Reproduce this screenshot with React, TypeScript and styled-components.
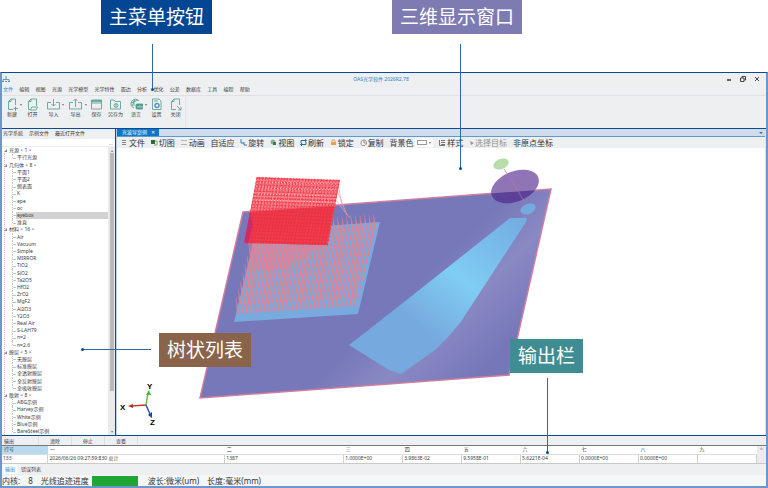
import React from "react";
import styled, { createGlobalStyle, css } from "styled-components";

const navy = "#0a4a94";
const frame = "#6c97cd";
const panel = "#eeeff0";
const teal = "#4b9c8d";

const GlobalStyle = createGlobalStyle`
  * { box-sizing: border-box; }
  body {
    margin: 0;
    background: #fff;
    color: #3c3c3c;
    font-family: "Noto Sans", "Noto Sans CJK SC", sans-serif;
    font-size: 5px;
    line-height: 7px;
  }
  button, input, select {
    margin: 0; padding: 0; border: 0; background: none;
    font: inherit; color: inherit; line-height: inherit;
  }
  ul { margin: 0; padding: 0; list-style: none; }
`;

const Page = styled.main`
  position: relative;
  display: flex;
  flex-direction: column;
  min-height: 100vh;
  padding-top: 72px;
`;

const AppWindow = styled.section`
  flex: 1;
  display: flex;
  flex-direction: column;
  border: solid ${frame};
  border-width: 0 2px 2px;
  border-top: 1px solid ${navy};
  background: ${panel};
`;

const TitleBar = styled.header`
  display: grid;
  grid-template-columns: 1fr auto 1fr;
  align-items: center;
  height: 12px;
  padding: 0 6px 0 0;
`;

const AppTitle = styled.h1`
  margin: 0;
  font-size: 5px;
  font-weight: 400;
  color: #2a86c4;
`;

const WindowButtons = styled.div`
  display: flex;
  justify-content: flex-end;
  gap: 8px;
  button { display: flex; }
`;

const MenuBar = styled.nav`
  display: flex;
  justify-content: space-between;
  width: 248px;
  padding: 1px 0 2px 1px;
  a { color: #3c3c3c; text-decoration: none; white-space: nowrap; }
  a[aria-current] { color: #2394dc; }
`;

const Ribbon = styled.div`
  display: flex;
  height: 33px;
  border-top: 1px solid #e0e1e5;
`;

const RibbonGroup = styled.div`
  display: grid;
  grid-template-columns: 20px 21px 21px 23px 19px 19px 22px 19px 19px;
  padding: 2px 0 6px;
  border-right: 1px solid #e3e4e8;
`;

const RibbonButton = styled.button`
  position: relative;
  display: flex;
  flex-direction: column;
  align-items: center;
  white-space: nowrap;
`;

const Caret = styled.i`
  position: absolute;
  top: 6px;
  right: 0;
  border: solid transparent;
  border-width: 2px 1px 0;
  border-top-color: #777;
`;

const Workspace = styled.div`
  flex: 1;
  display: flex;
  border: solid ${navy};
  border-width: 1px 0;
`;

const SidePanel = styled.aside`
  display: flex;
  flex-direction: column;
  width: 114px;
  border-right: 1px solid ${navy};
`;

const SideTabs = styled.div`
  display: flex;
  gap: 6px;
  height: 10px;
  padding-left: 1px;
  white-space: nowrap;
  button { display: block; height: 8px; }
`;

const SearchRow = styled.div`
  display: flex;
  height: 7px;
  background: #fff;
  input { flex: 1; min-width: 0; outline: 0; }
  button { color: #888; padding-right: 2px; line-height: 4px; }
`;

const TreeArea = styled.div`
  flex: 1;
  display: flex;
  margin-top: 1px;
  background: #fff;
`;

const Tree = styled.ul`
  position: relative;
  flex: 1;
  display: flex;
  flex-direction: column;
  &::before {
    content: "";
    position: absolute;
    inset: 6px auto 0 2px;
    border-left: 1px dotted #dcbccb;
  }
`;

const TreeRow = styled.li<{ $group?: boolean; $selected?: boolean; $last?: boolean }>`
  position: relative;
  flex: 1 1 7px;
  display: flex;
  align-items: center;
  min-height: 7px;
  white-space: nowrap;
  ${(p) =>
    p.$group
      ? css`padding-left: 7px;`
      : css`
          margin-left: 10px;
          padding-left: 5px;
          background: ${p.$selected ? "linear-gradient(90deg, transparent 4px, #d2d2d2 4px)" : "none"};
          &::before {
            content: "";
            position: absolute;
            left: 0;
            top: 0;
            bottom: ${p.$last ? "50%" : "0"};
            border-left: 1px dotted #c2c2c2;
          }
          &::after {
            content: "";
            position: absolute;
            left: 1px;
            top: 50%;
            width: 3px;
            border-top: 1px solid #c4c4c4;
          }
        `}
`;

const Twisty = styled.i`
  position: absolute;
  left: 2px;
  border: solid transparent;
  border-width: 0 0 3px 3px;
  border-bottom-color: #888;
`;

const ScrollTrack = styled.div`
  display: flex;
  flex-direction: column;
  align-items: center;
  width: 7px;
  padding: 1px 0;
  background: #eaeaea;
  color: #777;
  font-size: 4px;
  line-height: 5px;
`;

const ScrollThumb = styled.div`
  flex: 1;
  width: 4px;
  margin-bottom: 38px;
  background: #b9b9b9;
`;

const Viewer = styled.section`
  flex: 1;
  display: flex;
  flex-direction: column;
  min-width: 0;
  border-right: 1px solid #d7e2f0;
  border-left: 1px solid #b9cee7;
  background: #fff;
`;

const DocTabs = styled.div`
  display: flex;
  justify-content: space-between;
  height: 8px;
  border-bottom: 1px solid #5e99d0;
  background: #d0dcea;
`;

const DocTab = styled.button`
  display: flex;
  justify-content: space-between;
  width: 42px;
  height: 7px;
  padding: 0 4px 0 5px;
  background: #0f76c6;
  color: #fff;
  line-height: 6px;
`;

const TabMenu = styled.button`
  width: 4px;
  height: 2px;
  margin: 3px 2px;
  background: #2377c0;
  clip-path: polygon(0 0, 100% 0, 50% 100%);
`;

const ViewTools = styled.div`
  display: flex;
  justify-content: space-between;
  align-items: center;
  width: 100%;
  height: 11px;
  padding: 0 212px 0 4px;
  background: ${panel};
  font-size: 8px;
  line-height: 11px;
  white-space: nowrap;
`;

const ToolButton = styled.button<{ $muted?: boolean }>`
  display: flex;
  align-items: center;
  gap: 1px;
  color: ${(p) => (p.$muted ? "#929292" : "#333")};
`;

const ColorField = styled.label`
  position: relative;
  display: flex;
  align-items: center;
  gap: 2px;
  select {
    appearance: none;
    width: 18px;
    height: 9px;
    background:
      linear-gradient(#fff, #fff) 3px 3px / 8px 3px no-repeat,
      linear-gradient(#999, #999) 2px 2px / 10px 5px no-repeat,
      #fff;
    color: transparent;
  }
`;

const SelectCaret = styled.i`
  position: absolute;
  right: 2px;
  border: solid transparent;
  border-width: 2px 1px 0;
  border-top-color: #777;
`;

const Scene = styled.svg`
  flex: 1;
  display: block;
  width: 100%;
  min-height: 240px;
`;

const Output = styled.section`
  display: flex;
  flex-direction: column;
`;

const OutputTools = styled.div`
  display: grid;
  grid-template-columns: 37px 33px 33px 33px;
  height: 9px;
  button { border-right: 1px solid #dedede; line-height: 8px; text-align: center; }
  button:first-child { padding-left: 2px; text-align: left; }
`;

const GridArea = styled.div`
  display: flex;
  height: 19px;
  border-top: 1px solid #777;
  border-bottom: 1px solid #c9c9c9;
`;

const DataGrid = styled.table`
  flex: 1;
  border-collapse: collapse;
  table-layout: fixed;
  background: #fff;
  th { height: 8px; padding: 0 2px; border-bottom: 1px solid #dcdcdc; font-weight: 400; text-align: left; }
  th:first-child { background: #b9d9ee; }
  td { height: 9px; padding: 0 1px; border-right: 1px solid #cfcfcf; white-space: nowrap; }
`;

const GridScroll = styled.div`
  width: 9px;
  background: #ececec;
  text-align: center;
  color: #555;
`;

const BottomTabs = styled.div`
  display: flex;
  height: 11px;
  button { padding: 0 3px; height: 10px; }
  button[aria-selected="true"] { background: #f8f9fa; color: #2394dc; }
`;

const StatusBar = styled.footer`
  display: flex;
  align-items: center;
  height: 11px;
  background: #f5f6f8;
  color: #333;
  font-size: 8px;
  line-height: 11px;
  white-space: nowrap;
  span { margin-right: 8px; }
`;

const Progress = styled.div`
  width: 46px;
  height: 10px;
  margin: 0 10px 0 3px;
  background: #1fa637;
`;

const Callout = styled.div<{ $x: number; $y: number; $color: string }>`
  position: absolute;
  left: ${(p) => p.$x}px;
  top: ${(p) => p.$y}px;
  padding: 0 8px;
  background: ${(p) => p.$color};
  color: #fff;
  font-size: 19px;
  line-height: 34px;
  white-space: nowrap;
`;

const Pointer = styled.div<{ $x: number; $y: number; $length: number; $flat?: boolean }>`
  position: absolute;
  left: ${(p) => p.$x}px;
  top: ${(p) => p.$y}px;
  width: ${(p) => (p.$flat ? p.$length : 1)}px;
  height: ${(p) => (p.$flat ? 1 : p.$length)}px;
  background: #2d69ad;
  &::after {
    content: "";
    position: absolute;
    ${(p) => (p.$flat ? "left: -1px; top: -1px;" : "left: -1px; bottom: -1px;")}
    width: 3px;
    height: 3px;
    border-radius: 50%;
    background: ${navy};
  }
`;

const menus = ["文件", "编辑", "视图", "光源", "光学模型", "光学特性", "面边", "分析", "优化", "公差", "数据库", "工具", "编程", "帮助"];

const page = "M9 12.5H2.5V.5H8L10.5 3V7M8 .5V3H10.5";
const ribbonItems: { label: string; caret?: boolean; icon: React.ReactNode }[] = [
  { label: "新建", caret: true, icon: <path d="M7 11.500H2.500V3.500L5 1H9.500V7M5 1V3.500H2.500M9.500 8.500V13M7.500 10.500H12" /> },
  { label: "打开", icon: <path d="M4 11.500H2.500V3.500L5 1H10.500V8M5 1V3.500H2.500M4 12L6 9H11.500L10 12Z" /> },
  { label: "导入", caret: true, icon: <path d="M4 4.500H.5V11H12.500V4.500H9M6.500 1V8M4.500 6L6.500 8L8.500 6" /> },
  { label: "导出", caret: true, icon: <path d="M4 4.500H.5V11H12.500V4.500H9M6.500 9V1M4.500 3L6.500 1L8.500 3" /> },
  { label: "保存", icon: <><path d="M1.500 2H11.500V11H1.500ZM1.500 5H11.500" /><path d="M1.500 3H11.500" strokeWidth="1.500" /></> },
  { label: "另存为", icon: <><path d="M1.500 11V2H5L6 3.500H11.500V11Z" /><circle cx="7" cy="7.500" r="2" /><path d="M7 6V9" /></> },
  { label: "语言", caret: true, icon: <><path d="M9 3A4.500 4.500 0 1 0 4 10M1 5L8 2M2 8L5 2M4 2V8" /><rect x="6" y="6" width="7" height="5" rx="1" fill={teal} /><path d="M8 9.500V8M10 9.500V7.500M12 9.500V8" stroke="#fff" /></> },
  { label: "设置", icon: <><path d="M2.500 1H9L11 3V11.500H2.500Z" /><path d="M4 3H8" /><circle cx="7" cy="7.500" r="2" stroke="#5c93c4" strokeWidth="1.500" /></> },
  { label: "关闭", icon: <path d="M7 11.500H2.500V3.500L5 1H10.500V7M5 1V3.500H2.500M8 8L12 12M12 9V12H9" /> },
];

const tree: { label: string; children: string[] }[] = [
  { label: "光源 < 1 >", children: ["平行光源"] },
  { label: "几何体 < 8 >", children: ["平面1", "平面2", "侧表面", "K", "epe", "oc", "eyebox", "准直"] },
  {
    label: "材料 < 16 >",
    children: ["Air", "Vacuum", "Simple", "MIRROR", "TiO2", "SiO2", "Ta2O5", "HfO2", "ZrO2", "MgF2", "Al2O3", "Y2O3", "Real Air", "S-LAH79", "n=2", "n=2.6"],
  },
  { label: "膜层 < 5 >", children: ["无膜层", "标准膜层", "全透射膜层", "全反射膜层", "全吸收膜层"] },
  { label: "散射 < 8 >", children: ["ABG示例", "Harvey示例", "White示例", "Blue示例", "BareSteel示例"] },
];

const tools: { label: string; icon?: React.ReactNode }[] = [
  { label: "文件", icon: <path d="M1 1.500H5M1 3.500H5M1 5.500H5" stroke="#888" /> },
  { label: "切图", icon: <><path d="M0 1H4V5H0Z" fill="#256b35" /><path d="M4 2H6V6H3" stroke="#7bac6e" fill="none" /></> },
  { label: "动画", icon: <path d="M0 1.500H6M0 5.500H6" stroke="#b5b5b5" /> },
  { label: "自适应" },
  { label: "旋转", icon: <path d="M1 0V4H4M4 3V6H7" stroke="#347ab5" fill="none" /> },
  { label: "视图", icon: <><circle cx="3" cy="3" r="2.500" fill="#8fae9a" /><path d="M3 3H6V6H3Z" fill="#377b62" /></> },
  { label: "刷新", icon: <path d="M1 4V1.500H6M6 3V5.500H1M5 0L6.500 1.500L5 3M2 4L.5 5.500L2 7" stroke="#1773b8" fill="none" /> },
  { label: "锁定", icon: <><path d="M1 3H6V6H1Z" fill="#e5a052" /><path d="M2 3V1H5V3" stroke="#d7a46e" fill="none" /></> },
  { label: "复制", icon: <path d="M1 2.500L3 1H5L6.500 3V5L5 6.500H2L1 5ZM4 1V4H6" stroke="#888" strokeWidth=".8" fill="none" /> },
];

const results: [string, string, string][] = [
  ["行号", "133", "46px"],
  ["一", "2026/06/26 09:27:59:830 总计", "177px"],
  ["二", "1387", "119px"],
  ["三", "1.0000E+00", "59px"],
  ["四", "3.9863E-02", "59px"],
  ["五", "9.5958E-01", "59px"],
  ["六", "5.6221E-04", "59px"],
  ["七", "0.0000E+00", "59px"],
  ["八", "0.0000E+00", "59px"],
  ["九", "", "59px"],
];

const raySpikes = Array.from({ length: 10 }, (_, row) =>
  Array.from({ length: 27 }, (_, col) => {
    const u = (col + 0.2) / 27;
    const v = row / 10;
    const x = 255 + u * 122 - v * 22;
    const y = 222 - u * 8 + v * 84;
    return `M${x.toFixed(1)} ${y.toFixed(1)}l3 16l-2 0Z`;
  }).join("")
).join("");

const meshLines = [
  ...Array.from({ length: 28 }, (_, i) => `M${(257 + i * 3.05).toFixed(1)} ${(177 + i * 0.1).toFixed(1)}l-12 66`),
  ...Array.from({ length: 20 }, (_, i) => `M${(257 - i * 0.65).toFixed(1)} ${(178 + i * 3.3).toFixed(1)}l83 3`),
].join("");

const plate = "243,212 551,189 509,375 200,398";

function ToolIcon({ children }: { children: React.ReactNode }) {
  return <svg width="7" height="7" viewBox="0 0 7 7" fill="none" aria-hidden="true">{children}</svg>;
}

function OpticalScene() {
  return (
    <Scene viewBox="117 148 648 287" role="img" aria-label="三维光路">
      <defs>
        <linearGradient id="plateFill" x1="395" y1="210" x2="530" y2="350" gradientUnits="userSpaceOnUse">
          <stop offset="0" stopColor="#7778b9" />
          <stop offset=".35" stopColor="#7778b9" />
          <stop offset=".6" stopColor="#8989c4" />
          <stop offset=".9" stopColor="#7677b9" />
        </linearGradient>
        <linearGradient id="guideFill" x1="395" y1="370" x2="515" y2="218" gradientUnits="userSpaceOnUse">
          <stop offset=".25" stopColor="#76a9dd" />
          <stop offset=".58" stopColor="#7fcdf4" />
          <stop offset="1" stopColor="#74aee2" />
        </linearGradient>
        <clipPath id="plateClip"><polygon points={plate} /></clipPath>
      </defs>
      <polygon points={plate} fill="url(#plateFill)" stroke="#ce7d9c" strokeWidth="1.500" />
      <polygon points="256,231 380,222 358,314 234,322" fill="#78aade" />
      <path d={raySpikes} fill="#e8808f" stroke="#e8808f" strokeWidth=".2" />
      <path d="M248 243L324 245L296 262L270 272L252 268Z" fill="#ed7d90" opacity=".45" />
      <path d="M338 183L342 206M337 190L347 215M335 199L350 218" fill="none" stroke="#f3a5b1" strokeWidth=".7" />
      <polygon points="257,177 340,180 327,245 244,243" fill="#f5606d" opacity=".8" />
      <path d={meshLines} fill="none" stroke="#ee3a48" strokeWidth=".9" strokeDasharray="3 1" />
      <path d="M260 182L336 184M259 188L335 190M258 194L334 196M256 200L332 202" fill="none" stroke="#ffc4c8" strokeWidth="1" strokeDasharray="1 2" />
      <polygon points="250,212 334,206 327,245 244,243" fill="#ef2638" opacity=".65" />
      <polygon points="250,212 253,224 248,243 244,243" fill="#be2879" opacity=".7" />
      <path d="M510 218L527 218L526 222L490 277L460 323L448 337L435 350L401 374L389 370L349 345L362 335L413 295Z" fill="url(#guideFill)" />
      <ellipse cx="515" cy="186.500" rx="25" ry="15" transform="rotate(-22 515 186.500)" fill="#8f75b5" />
      <g clipPath="url(#plateClip)">
        <ellipse cx="515" cy="186.500" rx="25" ry="15" transform="rotate(-22 515 186.500)" fill="#5b4198" />
      </g>
      <path d="M504 169L526 204" stroke="#bd6fae" strokeWidth=".7" />
      <ellipse cx="501" cy="164" rx="8" ry="5" transform="rotate(-22 501 164)" fill="#b9dcab" />
      <ellipse cx="528" cy="209" rx="8" ry="5" transform="rotate(-22 528 209)" fill="#75aadf" />
      <g strokeWidth="1.500" fontFamily="Liberation Sans, sans-serif" fontSize="8" fontWeight="700">
        <path d="M146 405L131 406" stroke="#c33b31" />
        <path d="M128 406L133 404V408Z" fill="#b62921" />
        <path d="M146 405L148 393" stroke="#65bc43" />
        <path d="M149 390L146 395L151 395Z" fill="#54b532" />
        <path d="M146 405L150 414" stroke="#3153a5" />
        <path d="M152 418L148 415L152 412Z" fill="#23439b" />
        <text x="120" y="410">X</text>
        <text x="147" y="389">Y</text>
        <text x="150" y="425">Z</text>
      </g>
    </Scene>
  );
}

export default function App() {
  return (
    <Page>
      <GlobalStyle />
      <AppWindow>
        <TitleBar>
          <svg width="8" height="8" viewBox="0 0 8 8" fill="none" stroke="#477db0" strokeWidth=".8" aria-hidden="true">
            <path d="M4 1V4M1 7V4.500H7V7M0 6.500H2M3 6.500H5M6 6.500H8" />
          </svg>
          <AppTitle>OAS光学软件 2026R2.78</AppTitle>
          <WindowButtons>
            <button aria-label="最小化"><svg width="6" height="6"><path d="M1 4H5" stroke="#333" strokeWidth="1.500" /></svg></button>
            <button aria-label="还原"><svg width="6" height="6" fill="none" stroke="#444"><path d="M2 2V.5H5.500V4H4M.5 2H4V5.500H.5Z" /></svg></button>
            <button aria-label="关闭"><svg width="6" height="6"><path d="M1 1L5 5M5 1L1 5" stroke="#444" /></svg></button>
          </WindowButtons>
        </TitleBar>
        <MenuBar>
          {menus.map((m, i) => <a key={m} href="#menu" aria-current={i === 0 ? "page" : undefined}>{m}</a>)}
        </MenuBar>
        <Ribbon>
          <RibbonGroup>
            {ribbonItems.map((item) => (
              <RibbonButton key={item.label}>
                <svg width="13" height="13" viewBox="0 0 13 13" fill="none" stroke={teal} strokeWidth=".8" aria-hidden="true">{item.icon}</svg>
                {item.label}
                {item.caret && <Caret />}
              </RibbonButton>
            ))}
          </RibbonGroup>
        </Ribbon>
        <Workspace>
          <SidePanel>
            <SideTabs>
              <button>光学系统</button>
              <button>示例文件</button>
              <button>最近打开文件</button>
            </SideTabs>
            <SearchRow>
              <input type="text" aria-label="搜索" />
              <button aria-label="更多">...</button>
            </SearchRow>
            <TreeArea>
              <Tree>
                {tree.map((group) => (
                  <React.Fragment key={group.label}>
                    <TreeRow $group><Twisty />{group.label}</TreeRow>
                    {group.children.map((c, i) => (
                      <TreeRow key={c} $selected={c === "eyebox"} $last={i === group.children.length - 1}>{c}</TreeRow>
                    ))}
                  </React.Fragment>
                ))}
              </Tree>
              <ScrollTrack><span>▴</span><ScrollThumb /><span>▾</span></ScrollTrack>
            </TreeArea>
          </SidePanel>
          <Viewer>
            <DocTabs>
              <DocTab><span>光波导案例</span><span>✕</span></DocTab>
              <TabMenu aria-label="标签列表" />
            </DocTabs>
            <ViewTools>
              {tools.map((t) => (
                <ToolButton key={t.label}>{t.icon && <ToolIcon>{t.icon}</ToolIcon>}{t.label}</ToolButton>
              ))}
              <ColorField>
                背景色
                <select aria-label="背景色"><option>白</option></select>
                <SelectCaret />
              </ColorField>
              <ToolButton>
                <ToolIcon><path d="M.5 1V6.500H6M2 1.500H6M2 3.500H6M2 5.500H6" stroke="#777" /></ToolIcon>样式
              </ToolButton>
              <ToolButton $muted>
                <svg width="5" height="6" aria-hidden="true"><path d="M1 1L5 3L2 5Z" fill="#999" /></svg>选择目标
              </ToolButton>
              <ToolButton>非原点坐标</ToolButton>
            </ViewTools>
            <OpticalScene />
          </Viewer>
        </Workspace>
        <Output>
          <OutputTools>
            <button>输出</button>
            <button>清除</button>
            <button>停止</button>
            <button>查看</button>
          </OutputTools>
          <GridArea>
            <DataGrid>
              <colgroup>{results.map(([h, , w]) => <col key={h} width={w} />)}</colgroup>
              <thead><tr>{results.map(([h]) => <th key={h} scope="col">{h}</th>)}</tr></thead>
              <tbody><tr>{results.map(([h, v]) => <td key={h}>{v}</td>)}</tr></tbody>
            </DataGrid>
            <GridScroll>^</GridScroll>
          </GridArea>
          <BottomTabs role="tablist">
            <button role="tab" aria-selected="true">输出</button>
            <button role="tab" aria-selected="false">错误列表</button>
          </BottomTabs>
          <StatusBar>
            <span>内核:</span>
            <span>8</span>
            光线追迹进度
            <Progress role="progressbar" aria-label="光线追迹进度" aria-valuenow={100} />
            <span>波长:微米(um)</span>
            <span>长度:毫米(mm)</span>
          </StatusBar>
        </Output>
      </AppWindow>
      <Pointer $x={152} $y={44} $length={46} />
      <Pointer $x={460} $y={44} $length={125} />
      <Pointer $x={82} $y={349} $length={69} $flat />
      <Pointer $x={547} $y={378} $length={75} />
      <Callout $x={101} $y={0} $color="#044691">主菜单按钮</Callout>
      <Callout $x={392} $y={0} $color="#7d7bb2">三维显示窗口</Callout>
      <Callout $x={159} $y={333} $color="#89634a">树状列表</Callout>
      <Callout $x={510} $y={339} $color="#3f8c92">输出栏</Callout>
    </Page>
  );
}
